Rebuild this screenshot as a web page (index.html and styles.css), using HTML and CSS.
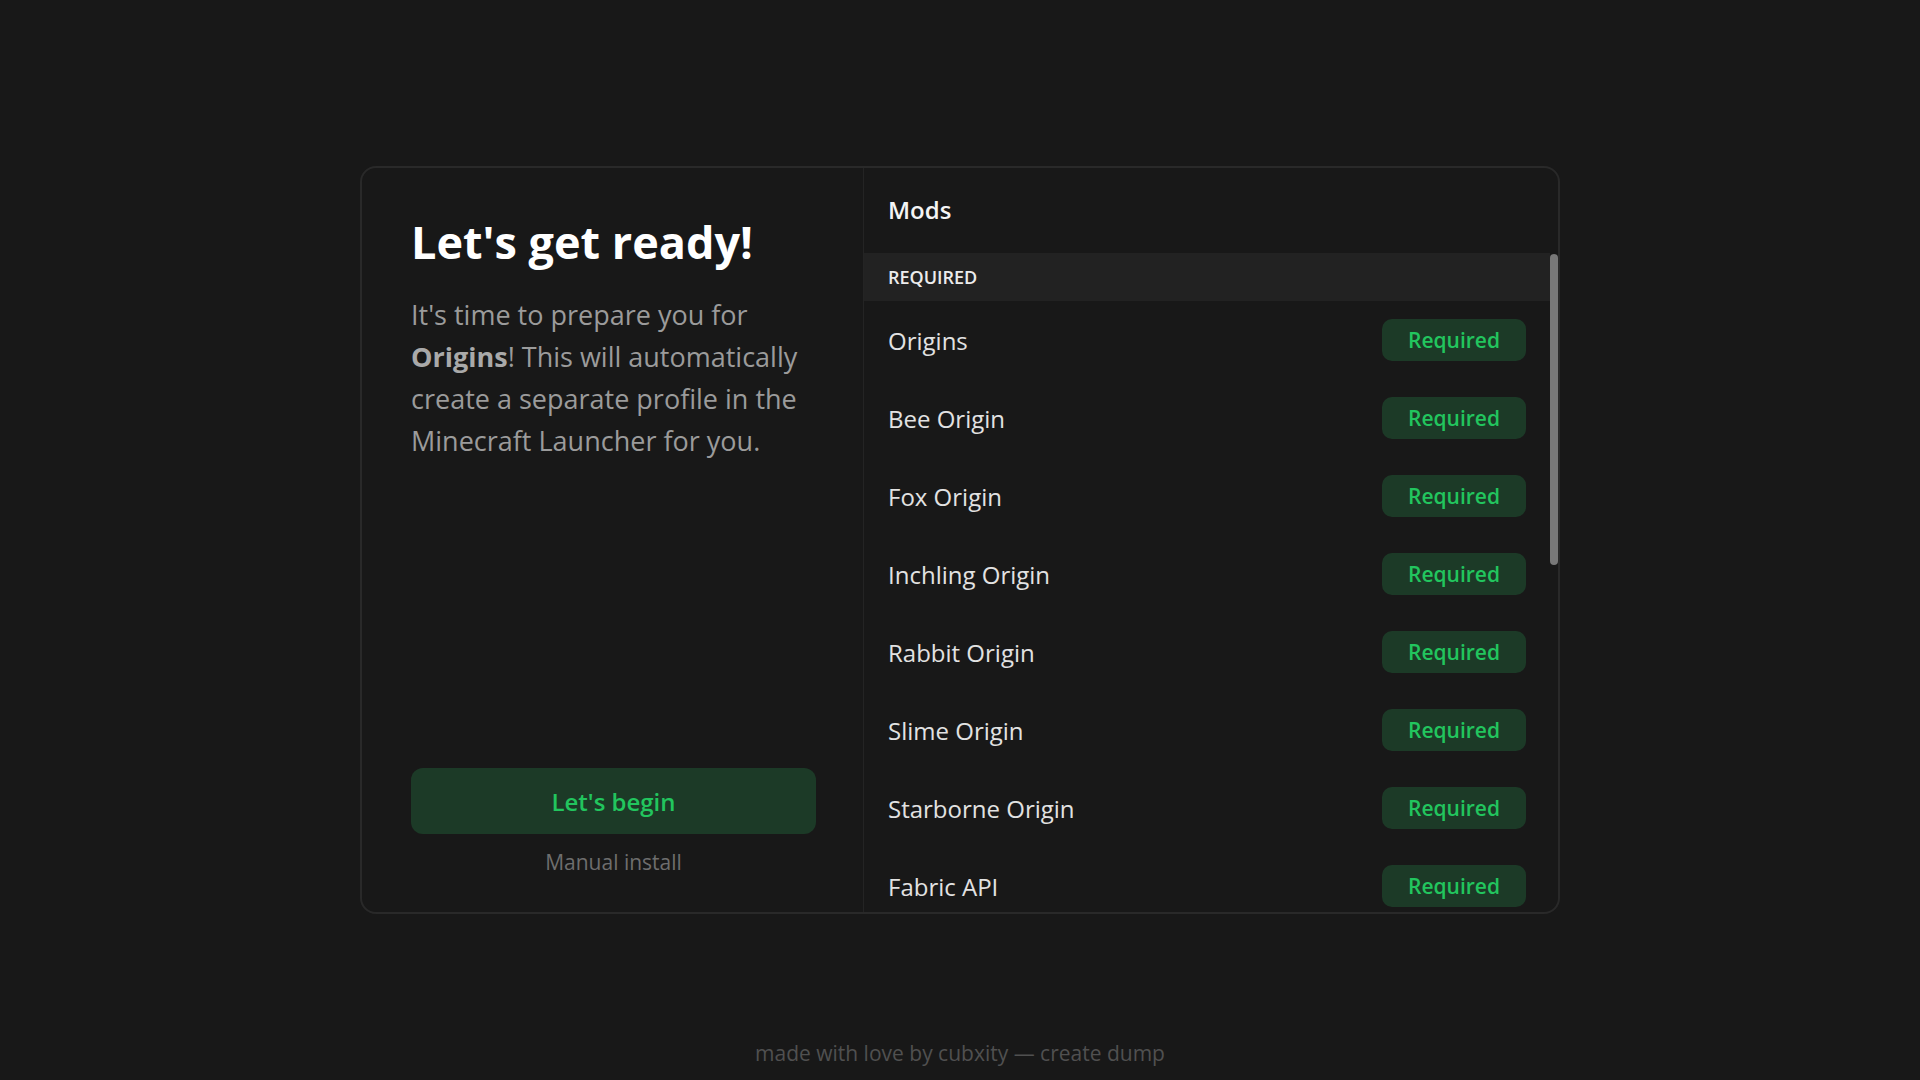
FILE: index.html
```html
<!DOCTYPE html>
<html lang="en">
<head>
<meta charset="utf-8">
<title>Origins installer</title>
<link rel="stylesheet" href="styles.css">
</head>
<body>
<div class="page">
  <div class="top"></div>
  <main class="card">
    <section class="intro">
      <h1 class="intro-title">Let's get ready!</h1>
      <p class="intro-text">It's time to prepare you for <strong>Origins</strong>! This will automatically create a separate profile in the Minecraft Launcher for you.</p>
      <div class="intro-spacer"></div>
      <button class="primary-btn">Let's begin</button>
      <a class="manual-link">Manual install</a>
    </section>
    <section class="mods">
      <header class="mods-header">Mods</header>
      <div class="mods-body">
        <div class="mods-list">
          <div class="mods-section">Required</div>
          <div class="mod-row"><span class="mod-name">Origins</span><span class="badge">Required</span></div>
          <div class="mod-row"><span class="mod-name">Bee Origin</span><span class="badge">Required</span></div>
          <div class="mod-row"><span class="mod-name">Fox Origin</span><span class="badge">Required</span></div>
          <div class="mod-row"><span class="mod-name">Inchling Origin</span><span class="badge">Required</span></div>
          <div class="mod-row"><span class="mod-name">Rabbit Origin</span><span class="badge">Required</span></div>
          <div class="mod-row"><span class="mod-name">Slime Origin</span><span class="badge">Required</span></div>
          <div class="mod-row"><span class="mod-name">Starborne Origin</span><span class="badge">Required</span></div>
          <div class="mod-row"><span class="mod-name">Fabric API</span><span class="badge">Required</span></div>
          <div class="mod-row"><span class="mod-name">Fabric Language Kotlin</span><span class="badge">Required</span></div>
          <div class="mod-row"><span class="mod-name">Pehkui</span><span class="badge">Required</span></div>
        </div>
        <div class="scroll-track"><div class="scroll-thumb"></div></div>
      </div>
    </section>
  </main>
  <footer class="footer">made with love by cubxity — create dump</footer>
</div>
</body>
</html>
```

FILE: styles.css
```css
html, body {
  margin: 0;
  padding: 0;
  background: #181818;
  font-family: "Open Sans", "Noto Sans", sans-serif;
}

.page {
  height: 100vh;
  display: grid;
  grid-template-rows: 1fr auto 1fr;
  justify-items: center;
}

.card {
  box-sizing: border-box;
  width: 1200px;
  height: 748px;
  border: 2px solid #292929;
  border-radius: 16px;
  background: #181818;
  display: flex;
  overflow: hidden;
}

.intro {
  box-sizing: border-box;
  flex: 0 0 502px;
  border-right: 1px solid #242424;
  padding: 44px 47px 34px 49px;
  display: flex;
  flex-direction: column;
}

.intro-title {
  margin: 0 0 22px;
  font-size: 45px;
  line-height: 60px;
  font-weight: 700;
  color: #ffffff;
}

.intro-text {
  margin: 0;
  font-size: 27px;
  line-height: 42px;
  color: #9b9b9b;
}

.intro-text strong {
  color: #a9a9a9;
  font-weight: 700;
}

.intro-spacer {
  flex: 1;
}

.primary-btn {
  height: 66px;
  border: none;
  border-radius: 12px;
  background: #1c3a27;
  color: #22c55e;
  font-family: inherit;
  font-size: 24px;
  font-weight: 600;
  cursor: pointer;
}

.manual-link {
  margin-top: 12px;
  text-align: center;
  font-size: 21px;
  line-height: 32px;
  color: #6e6e6e;
}

.mods {
  flex: 1;
  min-width: 0;
  display: flex;
  flex-direction: column;
}

.mods-header {
  padding: 24px 24px 25px;
  font-size: 24px;
  line-height: 36px;
  font-weight: 600;
  color: #f4f4f4;
}

.mods-body {
  flex: 1;
  min-height: 0;
  display: flex;
}

.mods-list {
  flex: 1;
  min-width: 0;
  overflow: hidden;
}

.scroll-track {
  flex: 0 0 8px;
  padding-top: 1px;
}

.scroll-thumb {
  height: 311px;
  border-radius: 4px;
  background: #787878;
}

.mods-section {
  height: 48px;
  padding: 0 24px;
  display: flex;
  align-items: center;
  background: #222222;
  font-size: 18px;
  font-weight: 600;
  text-transform: uppercase;
  color: #ececec;
}

.mod-row {
  display: flex;
  align-items: center;
  justify-content: space-between;
  padding: 18px 24px;
}

.mod-name {
  font-size: 24px;
  color: #e2e2e2;
}

.badge {
  box-sizing: border-box;
  height: 42px;
  width: 144px;
  display: flex;
  align-items: center;
  justify-content: center;
  border-radius: 10px;
  background: #1c3a27;
  color: #22c55e;
  font-size: 21px;
  font-weight: 600;
}

.footer {
  align-self: end;
  padding-bottom: 11px;
  font-size: 21px;
  line-height: 32px;
  color: #505050;
}
```
